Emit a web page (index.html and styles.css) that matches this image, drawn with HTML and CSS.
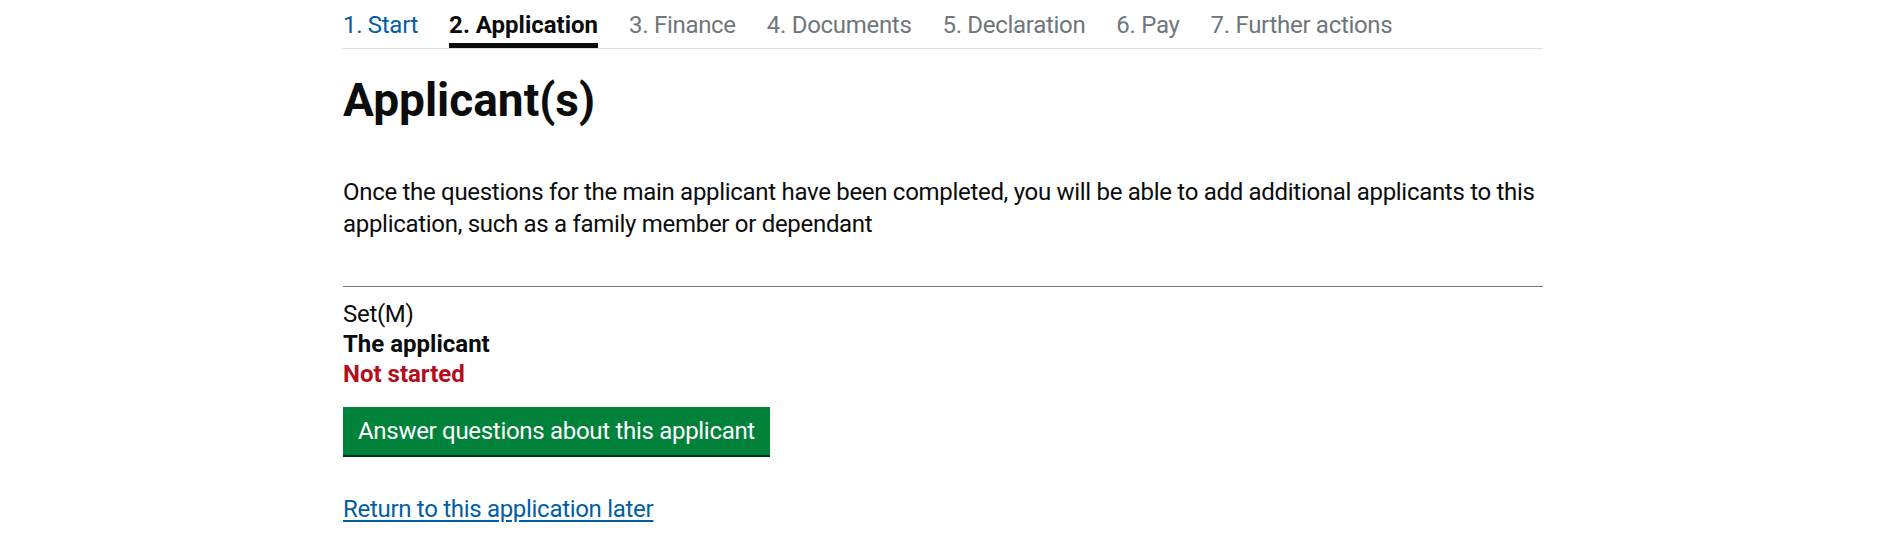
FILE: index.html
```html
<!DOCTYPE html>
<html lang="en">
  <head>
    <meta charset="UTF-8" />
    <meta name="viewport" content="width=device-width, initial-scale=1.0" />
    <title>Applicant(s)</title>
    <link rel="stylesheet" href="styles.css">
  </head>

  <body>
    <div class="page">
      <nav class="steps">
        <a href="#" class="step step-done">1. Start</a>
        <span class="step step-current">2. Application</span>
        <span class="step">3. Finance</span>
        <span class="step">4. Documents</span>
        <span class="step">5. Declaration</span>
        <span class="step">6. Pay</span>
        <span class="step">7. Further actions</span>
      </nav>

      <main>
        <h1 class="heading">Applicant(s)</h1>
        <p class="intro">Once the questions for the main applicant have been completed, you will be able to add additional applicants to this application, such as a family member or dependant</p>

        <div class="applicant">
          <div class="applicant-set">Set(M)</div>
          <div class="applicant-name">The applicant</div>
          <div class="applicant-status">Not started</div>
          <button type="button" class="btn-start">Answer questions about this applicant</button>
        </div>

        <a href="#" class="later-link">Return to this application later</a>
      </main>
    </div>
  </body>
</html>
```

FILE: styles.css
```css
body {
  margin: 0;
  padding-right: 17px;
  background: #fff;
  color: #0b0c0c;
  font-family: Roboto, "Noto Sans", sans-serif;
  font-size: 24px;
  line-height: 30px;
  letter-spacing: -0.3px;
}

.page {
  width: 1200px;
  margin: 0 auto;
}

.steps {
  display: flex;
  gap: 31px;
  border-bottom: 1px solid #dee0e2;
}

.step {
  padding: 10px 0 3px;
  border-bottom: 5px solid transparent;
  color: #6f777b;
  text-decoration: none;
}

.step-done {
  color: #005ea5;
}

.step-current {
  color: #0b0c0c;
  font-weight: 700;
  letter-spacing: 0;
  border-bottom-color: #0b0c0c;
}

.heading {
  margin: 26px 0 0;
  font-size: 46px;
  line-height: 50px;
  font-weight: 700;
  letter-spacing: 0;
}

.intro {
  margin: 51px 0 0;
  padding-bottom: 46px;
  line-height: 32px;
  border-bottom: 1px solid #6f777b;
}

.applicant {
  padding-top: 12px;
}

.applicant-name,
.applicant-status {
  font-weight: 700;
  letter-spacing: 0;
}

.applicant-status {
  color: #b10e1e;
}

.btn-start {
  display: block;
  margin-top: 18px;
  height: 48px;
  padding: 0 15px;
  border: 0;
  border-radius: 0;
  background: #00823b;
  box-shadow: 0 2px 0 #003618;
  color: #fff;
  font-family: inherit;
  font-size: 24px;
  line-height: 30px;
  letter-spacing: inherit;
  cursor: pointer;
}

.later-link {
  display: inline-block;
  margin-top: 39px;
  color: #005ea5;
  text-decoration: underline;
  text-underline-offset: 3px;
}
```
